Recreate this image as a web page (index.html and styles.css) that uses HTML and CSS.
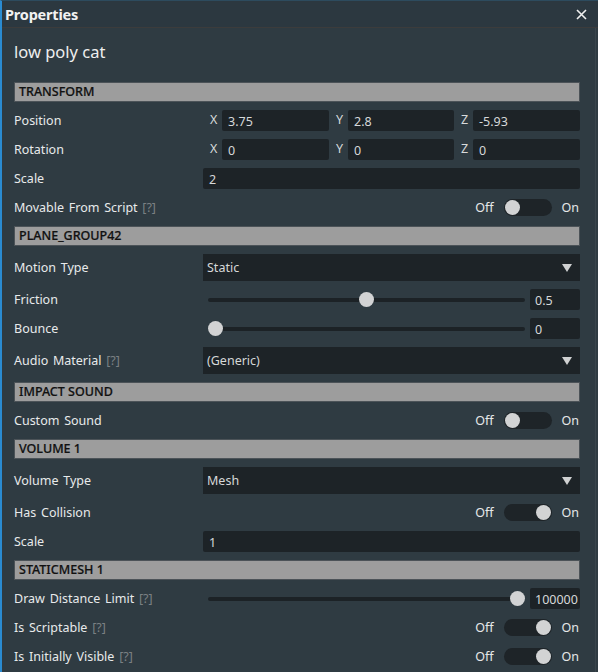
FILE: index.html
```html
<!DOCTYPE html>
<html>
<head>
<meta charset="utf-8">
<link rel="stylesheet" href="styles.css">
</head>
<body>
<div class="panel">
  <div class="titlebar">
    <span class="title">Properties</span>
    <svg class="close" width="11" height="11" viewBox="0 0 11 11"><path d="M1 1 L10 10 M10 1 L1 10" stroke="#f0f0f0" stroke-width="1.6" fill="none"/></svg>
  </div>
  <div class="body">
    <div class="content">
      <div class="name">low poly cat</div>

      <div class="section">TRANSFORM</div>
      <div class="row">
        <div class="label">Position</div>
        <div class="xyz">
          <div class="axis"><span class="ax">X</span><div class="input">3.75</div></div>
          <div class="axis"><span class="ax">Y</span><div class="input">2.8</div></div>
          <div class="axis"><span class="ax">Z</span><div class="input">-5.93</div></div>
        </div>
      </div>
      <div class="row">
        <div class="label">Rotation</div>
        <div class="xyz">
          <div class="axis"><span class="ax">X</span><div class="input">0</div></div>
          <div class="axis"><span class="ax">Y</span><div class="input">0</div></div>
          <div class="axis"><span class="ax">Z</span><div class="input">0</div></div>
        </div>
      </div>
      <div class="row">
        <div class="label">Scale</div>
        <div class="input">2</div>
      </div>
      <div class="row">
        <div class="label">Movable From Script <span class="help">[?]</span></div>
        <div class="toggle-wrap"><span class="off">Off</span><span class="toggle"><span class="knob"></span></span><span class="on">On</span></div>
      </div>

      <div class="section">PLANE_GROUP42</div>
      <div class="row tall">
        <div class="label">Motion Type</div>
        <div class="select"><span>Static</span><span class="tri"></span></div>
      </div>
      <div class="row">
        <div class="label">Friction</div>
        <div class="slider-wrap">
          <div class="track"><div class="rail"><span class="sknob" style="left: 50%"></span></div></div>
          <div class="input num">0.5</div>
        </div>
      </div>
      <div class="row">
        <div class="label">Bounce</div>
        <div class="slider-wrap">
          <div class="track"><div class="rail"><span class="sknob" style="left: 0%"></span></div></div>
          <div class="input num">0</div>
        </div>
      </div>
      <div class="row tall">
        <div class="label">Audio Material <span class="help">[?]</span></div>
        <div class="select"><span>(Generic)</span><span class="tri"></span></div>
      </div>

      <div class="section">IMPACT SOUND</div>
      <div class="row">
        <div class="label">Custom Sound</div>
        <div class="toggle-wrap"><span class="off">Off</span><span class="toggle"><span class="knob"></span></span><span class="on">On</span></div>
      </div>

      <div class="section">VOLUME 1</div>
      <div class="row tall">
        <div class="label">Volume Type</div>
        <div class="select"><span>Mesh</span><span class="tri"></span></div>
      </div>
      <div class="row">
        <div class="label">Has Collision</div>
        <div class="toggle-wrap"><span class="off">Off</span><span class="toggle is-on"><span class="knob"></span></span><span class="on">On</span></div>
      </div>
      <div class="row">
        <div class="label">Scale</div>
        <div class="input">1</div>
      </div>

      <div class="section">STATICMESH 1</div>
      <div class="row">
        <div class="label">Draw Distance Limit <span class="help">[?]</span></div>
        <div class="slider-wrap">
          <div class="track"><div class="rail"><span class="sknob" style="left: 100%"></span></div></div>
          <div class="input num">100000</div>
        </div>
      </div>
      <div class="row">
        <div class="label">Is Scriptable <span class="help">[?]</span></div>
        <div class="toggle-wrap"><span class="off">Off</span><span class="toggle is-on"><span class="knob"></span></span><span class="on">On</span></div>
      </div>
      <div class="row">
        <div class="label">Is Initially Visible <span class="help">[?]</span></div>
        <div class="toggle-wrap"><span class="off">Off</span><span class="toggle is-on"><span class="knob"></span></span><span class="on">On</span></div>
      </div>
    </div>
  </div>
</div>
</body>
</html>
```

FILE: styles.css
```css
* { box-sizing: border-box; }
html, body { margin: 0; padding: 0; }
body {
  background: #2f3b42;
  font-family: "Noto Sans", "Open Sans", sans-serif;
  color: #e6e8e9;
}
.panel {
  width: 598px;
  height: 672px;
  overflow: hidden;
  border-left: 2px solid #2a8bd1;
  border-top: 1px solid #2d4b5e;
  background: #2f3b42;
  display: flex;
  flex-direction: column;
}
.titlebar {
  height: 27px;
  flex: none;
  display: flex;
  align-items: center;
  justify-content: space-between;
  padding: 0 11px 0 3px;
  background: #2c3840;
  border-bottom: 1px solid #3c3c3c;
}
.title {
  font-size: 14.5px;
  font-weight: 700;
  color: #f2f2f2;
  letter-spacing: -0.2px;
}
.close { display: block; margin-top: 1px; }
.body {
  flex: 1;
  margin-right: 2px;
  border-right: 1px solid #3a454c;
}
.content {
  display: flex;
  flex-direction: column;
  gap: 8px;
  padding: 12px 15px 0 12px;
}
.name {
  height: 24px;
  line-height: 24px;
  font-size: 16.5px;
  color: #eeeeee;
  margin-bottom: 10px;
}
.section {
  height: 20px;
  background: #9d9d9d;
  border: 1px solid #4c5358;
  color: #111111;
  font-size: 12.5px;
  font-weight: 500;
  line-height: 18px;
  padding-left: 4px;
  -webkit-text-stroke: 0.2px #111111;
}
.row {
  height: 21px;
  display: grid;
  grid-template-columns: 189px 1fr;
  align-items: center;
}
.row.tall { height: 27px; }
.label {
  font-size: 12.5px;
  word-spacing: 1.5px;
  color: #e8eaeb;
  white-space: nowrap;
}
.help { color: #7b8083; }
.input {
  height: 21px;
  background: #1d2327;
  border-radius: 2px;
  font-size: 12.5px;
  color: #d6d8d9;
  line-height: 23px;
  padding-left: 6px;
}
.xyz {
  display: grid;
  grid-template-columns: 126px 125px 1fr;
}
.axis { display: flex; align-items: center; }
.ax {
  width: 19px;
  padding-left: 7px;
  font-size: 12.5px;
  color: #d8dadb;
  margin-top: -3px;
}
.axis .input { flex: 1; }
.toggle-wrap {
  display: flex;
  justify-content: flex-end;
  align-items: center;
  font-size: 12.5px;
  color: #e6e8e9;
}
.off { margin-right: 10px; }
.on { margin-left: 10px; margin-right: 1px; }
.toggle {
  width: 48px;
  height: 17px;
  border-radius: 9px;
  background: #1e2428;
  position: relative;
  display: block;
}
.knob {
  position: absolute;
  top: 1px;
  left: 1px;
  width: 15px;
  height: 15px;
  border-radius: 50%;
  background: #d2d3d4;
}
.toggle.is-on .knob { left: auto; right: 1px; }
.select {
  height: 27px;
  background: #1d2327;
  display: flex;
  align-items: center;
  justify-content: space-between;
  padding: 0 8px 0 4px;
  font-size: 12.5px;
  color: #d6d8d9;
}
.tri {
  width: 0;
  height: 0;
  border-left: 5px solid transparent;
  border-right: 5px solid transparent;
  border-top: 8px solid #d0d1d2;
}
.slider-wrap {
  display: flex;
  align-items: center;
}
.track {
  flex: 1;
  height: 4px;
  margin: 0 5px;
  background: #1c2226;
  border-radius: 2px;
}
.rail {
  position: relative;
  height: 4px;
  margin: 0 7.5px;
}
.sknob {
  position: absolute;
  top: -6px;
  width: 15px;
  height: 15px;
  border-radius: 50%;
  background: #d2d3d4;
  margin-left: -7.5px;
}
.num { width: 50px; flex: none; padding-left: 5px; }
```
